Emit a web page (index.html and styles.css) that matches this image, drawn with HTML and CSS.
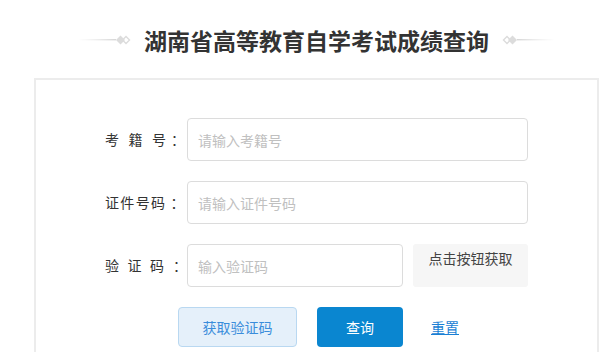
FILE: index.html
```html
<!DOCTYPE html>
<html lang="zh-CN">
<head>
    <meta charset="UTF-8">
    <title>湖南省高等教育自学考试成绩查询</title>
    <link rel="stylesheet" href="styles.css">
</head>
<body>
    <div class="page">
        <header class="title">
            <svg class="orn" width="54" height="14" viewBox="0 0 54 14">
                <defs>
                    <linearGradient id="fadeL" x1="0" x2="1">
                        <stop offset="0" stop-color="#e2e2e2" stop-opacity="0"/>
                        <stop offset="1" stop-color="#d6d6d6"/>
                    </linearGradient>
                </defs>
                <rect x="0" y="6" width="38" height="1.4" fill="url(#fadeL)"/>
                <path d="M38 7 L42.5 2.5 L47 7 L42.5 11.5 Z" fill="#dcdcdc"/>
                <path d="M44.5 7 L48 3.5 L51.5 7 L48 10.5 Z" fill="none" stroke="#dcdcdc" stroke-width="1.4"/>
            </svg>
            <h1>湖南省高等教育自学考试成绩查询</h1>
            <svg class="orn" width="54" height="14" viewBox="0 0 54 14">
                <defs>
                    <linearGradient id="fadeR" x1="0" x2="1">
                        <stop offset="0" stop-color="#d6d6d6"/>
                        <stop offset="1" stop-color="#e2e2e2" stop-opacity="0"/>
                    </linearGradient>
                </defs>
                <path d="M2.5 7 L6 3.5 L9.5 7 L6 10.5 Z" fill="none" stroke="#dcdcdc" stroke-width="1.4"/>
                <path d="M7 7 L11.5 2.5 L16 7 L11.5 11.5 Z" fill="#dcdcdc"/>
                <rect x="16" y="6" width="38" height="1.4" fill="url(#fadeR)"/>
            </svg>
        </header>

        <div class="box">
            <div class="row">
                <label class="label l1"><span class="chars">考籍号</span><span class="colon">：</span></label>
                <input type="text" class="field" placeholder="请输入考籍号">
            </div>
            <div class="row">
                <label class="label l2"><span class="chars">证件号码</span><span class="colon">：</span></label>
                <input type="text" class="field" placeholder="请输入证件号码">
            </div>
            <div class="row">
                <label class="label l3"><span class="chars">验证码</span><span class="colon">：</span></label>
                <input type="text" class="field short" placeholder="输入验证码">
                <div class="code-img">点击按钮获取</div>
            </div>
            <div class="actions">
                <button class="btn btn-code">获取验证码</button>
                <button class="btn btn-query">查询</button>
                <a href="javascript:void(0);" class="reset">重置</a>
            </div>
        </div>
    </div>
</body>
</html>
```

FILE: styles.css
```css
body {
    margin: 0;
    padding: 0;
    background: #fff;
    color: #333;
    font-family: "Noto Sans CJK SC", "Liberation Sans", sans-serif;
    font-size: 14px;
}

.page {
    padding-left: 34px;
    width: 565px;
}

.title {
    height: 78px;
    display: flex;
    align-items: center;
    justify-content: center;
    gap: 12px;
    padding-top: 2px;
    box-sizing: border-box;
}

.title h1 {
    margin: 0;
    font-size: 23px;
    font-weight: bold;
    color: #333;
    line-height: 30px;
}

.orn {
    display: block;
}

.box {
    border: 2px solid #ececec;
    border-bottom: none;
    padding: 38px 0 6px 0;
    height: 274px;
    box-sizing: border-box;
    display: flex;
    flex-direction: column;
    gap: 20px;
}

.row {
    display: flex;
    align-items: flex-start;
}

/* label: characters spread over a fixed width, then the colon */
.label {
    flex: none;
    width: 151px;
    box-sizing: border-box;
    padding-left: 69px;
    height: 43px;
    line-height: 43px;
    display: flex;
    color: #333;
    white-space: nowrap;
}

.label .chars {
    display: inline-block;
    text-align: justify;
    text-align-last: justify;
}

.l1 .chars { width: 61px; }
.l1 .colon { margin-left: 5px; }

.l2 .chars { width: 60px; }
.l2 .colon { margin-left: 5.5px; }

.l3 .chars { width: 62px; }
.l3 .colon { margin-left: 9px; }

.field {
    width: 341px;
    height: 43px;
    box-sizing: border-box;
    border: 1px solid #dcdcdc;
    border-radius: 4px;
    padding: 0 10px;
    font-family: inherit;
    font-size: 14px;
    color: #333;
    outline: none;
}

.field::placeholder {
    color: #c0c0c0;
}

.field.short {
    width: 216px;
}

.code-img {
    margin-left: 10px;
    width: 115px;
    height: 43px;
    background: #f6f6f6;
    border-radius: 3px;
    text-align: center;
    line-height: 28px;
    color: #444;
}

.actions {
    display: flex;
    align-items: center;
    gap: 20px;
    padding-left: 142px;
}

.btn {
    height: 40px;
    border-radius: 4px;
    font-family: inherit;
    font-size: 14px;
    cursor: pointer;
}

.btn-code {
    width: 119px;
    background: #e5f0fa;
    border: 1px solid #b9d8f1;
    color: #3a8ddb;
}

.btn-query {
    width: 86px;
    background: #0a86d0;
    border: none;
    color: #fff;
}

.reset {
    margin-left: 8px;
    color: #1a7fd4;
    font-size: 14px;
    text-decoration: underline;
}
```
